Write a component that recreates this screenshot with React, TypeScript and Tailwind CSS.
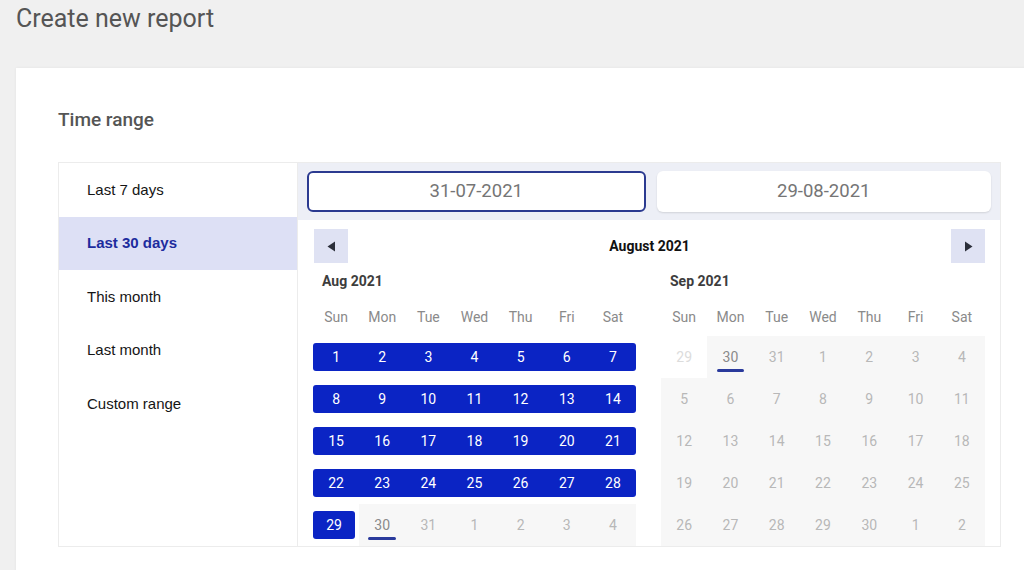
import React from 'react'

type Cell = { d: number; kind: 'range' | 'off' | 'out'; today?: boolean; end?: boolean }

const r = (a: number, b: number): Cell[] =>
  Array.from({ length: b - a + 1 }, (_, i) => ({ d: a + i, kind: 'range' as const }))
const off = (a: number, b: number): Cell[] =>
  Array.from({ length: b - a + 1 }, (_, i) => ({ d: a + i, kind: 'off' as const }))

const AUG: Cell[] = [
  ...r(1, 28),
  { d: 29, kind: 'range', end: true },
  { d: 30, kind: 'off', today: true },
  { d: 31, kind: 'off' },
  ...off(1, 4),
]

const SEP: Cell[] = [
  { d: 29, kind: 'out' },
  { d: 30, kind: 'off', today: true },
  { d: 31, kind: 'off' },
  ...off(1, 30),
  ...off(1, 2),
]

const DAYS = ['Sun', 'Mon', 'Tue', 'Wed', 'Thu', 'Fri', 'Sat']
const PRESETS = ['Last 7 days', 'Last 30 days', 'This month', 'Last month', 'Custom range']

function Month({ title, cells }: { title: string; cells: Cell[] }) {
  return (
    <div>
      <div className="mt-[8px] h-[20px] pl-[9px] text-[14px] leading-[20px] font-bold text-[#3d3d3d]">{title}</div>
      <div className="grid grid-cols-7 h-[45px] items-end pb-[9px]">
        {DAYS.map((d) => (
          <div key={d} className="text-center text-[14px] leading-[20px] text-[#8a8a8a]">{d}</div>
        ))}
      </div>
      <div className="grid grid-cols-7">
        {cells.map((c, i) => {
          const col = i % 7
          if (c.kind === 'range') {
            const first = col === 0
            const last = col === 6 || c.end
            return (
              <div key={i} className="h-[42px] flex items-center">
                <div
                  className={`h-[28px] w-full flex items-center justify-center bg-[#0b24c4] text-white text-[14px] ${first ? 'rounded-l-[3px]' : ''} ${last ? 'rounded-r-[3px]' : ''} ${c.end ? 'mr-[4px]' : ''}`}
                >
                  {c.d}
                </div>
              </div>
            )
          }
          if (c.kind === 'out') {
            return (
              <div key={i} className="h-[42px] flex items-center justify-center text-[14px] text-[#dcdcdc]">
                {c.d}
              </div>
            )
          }
          return (
            <div key={i} className="h-[42px] flex items-center justify-center bg-[#f7f7f7] text-[14px]">
              {c.today ? (
                <span className="relative text-[#8a8a8a]">
                  {c.d}
                  <span className="absolute left-[-6px] right-[-6px] bottom-[-4px] h-[3px] rounded-full bg-[#2a3a9c]" />
                </span>
              ) : (
                <span className="text-[#b8b8b8]">{c.d}</span>
              )}
            </div>
          )
        })}
      </div>
    </div>
  )
}

export default function App() {
  return (
    <div className="w-[1024px] h-[570px] overflow-hidden bg-[#f0f0f0] font-['Roboto',sans-serif]">
      <div className="pl-4 pt-[5px] h-[68px] text-[25px] leading-[28px] text-[#555555]">Create new report</div>
      <div className="ml-4 w-[1030px] h-[520px] bg-white shadow-[0_0_3px_rgba(0,0,0,0.06)] pl-[42px] pt-[40px]">
        <div className="text-[19px] leading-[24px] font-medium text-[#555555] mb-[30px]">Time range</div>
        <div className="flex w-[943px] h-[385px] border border-[#ececec]">
          <div className="w-[239px] shrink-0 border-r border-[#ececec] font-['Liberation_Sans',sans-serif]">
            {PRESETS.map((p) => {
              const active = p === 'Last 30 days'
              return (
                <div
                  key={p}
                  className={`h-[53.5px] flex items-center pl-[28px] text-[15px] ${active ? 'bg-[#dde0f5] text-[#1d2c9e] font-bold' : 'text-[#151515]'}`}
                >
                  {p}
                </div>
              )
            })}
          </div>
          <div className="flex-1 min-w-0 flex flex-col">
            <div className="h-[57px] bg-[#edeff6] px-[9px] flex items-center gap-[11px]">
              <div className="flex-1 h-[41px] rounded-[6px] border-2 border-[#2b3a90] bg-white flex items-center justify-center text-[18.5px] text-[#757575]">
                31-07-2021
              </div>
              <div className="flex-1 h-[41px] rounded-[6px] bg-white shadow-[0_1px_2px_rgba(0,0,0,0.12)] flex items-center justify-center text-[18.5px] text-[#757575]">
                29-08-2021
              </div>
            </div>
            <div className="px-[15px] pt-[9px]">
              <div className="flex items-center h-[34px]">
                <button className="ml-px w-[34px] h-[34px] bg-[#dfe2f3] flex items-center justify-center">
                  <svg width="9" height="11" viewBox="0 0 9 11"><path d="M8 0.5 L0.5 5.5 L8 10.5 Z" fill="#2b2f3a" /></svg>
                </button>
                <div className="flex-1 text-center text-[14px] font-bold text-[#111111]">August 2021</div>
                <button className="w-[34px] h-[34px] bg-[#dfe2f3] flex items-center justify-center">
                  <svg width="9" height="11" viewBox="0 0 9 11"><path d="M1 0.5 L8.5 5.5 L1 10.5 Z" fill="#2b2f3a" /></svg>
                </button>
              </div>
              <div className="grid grid-cols-[323px_324px] gap-x-[25px]">
                <Month title="Aug 2021" cells={AUG} />
                <Month title="Sep 2021" cells={SEP} />
              </div>
            </div>
          </div>
        </div>
      </div>
    </div>
  )
}
